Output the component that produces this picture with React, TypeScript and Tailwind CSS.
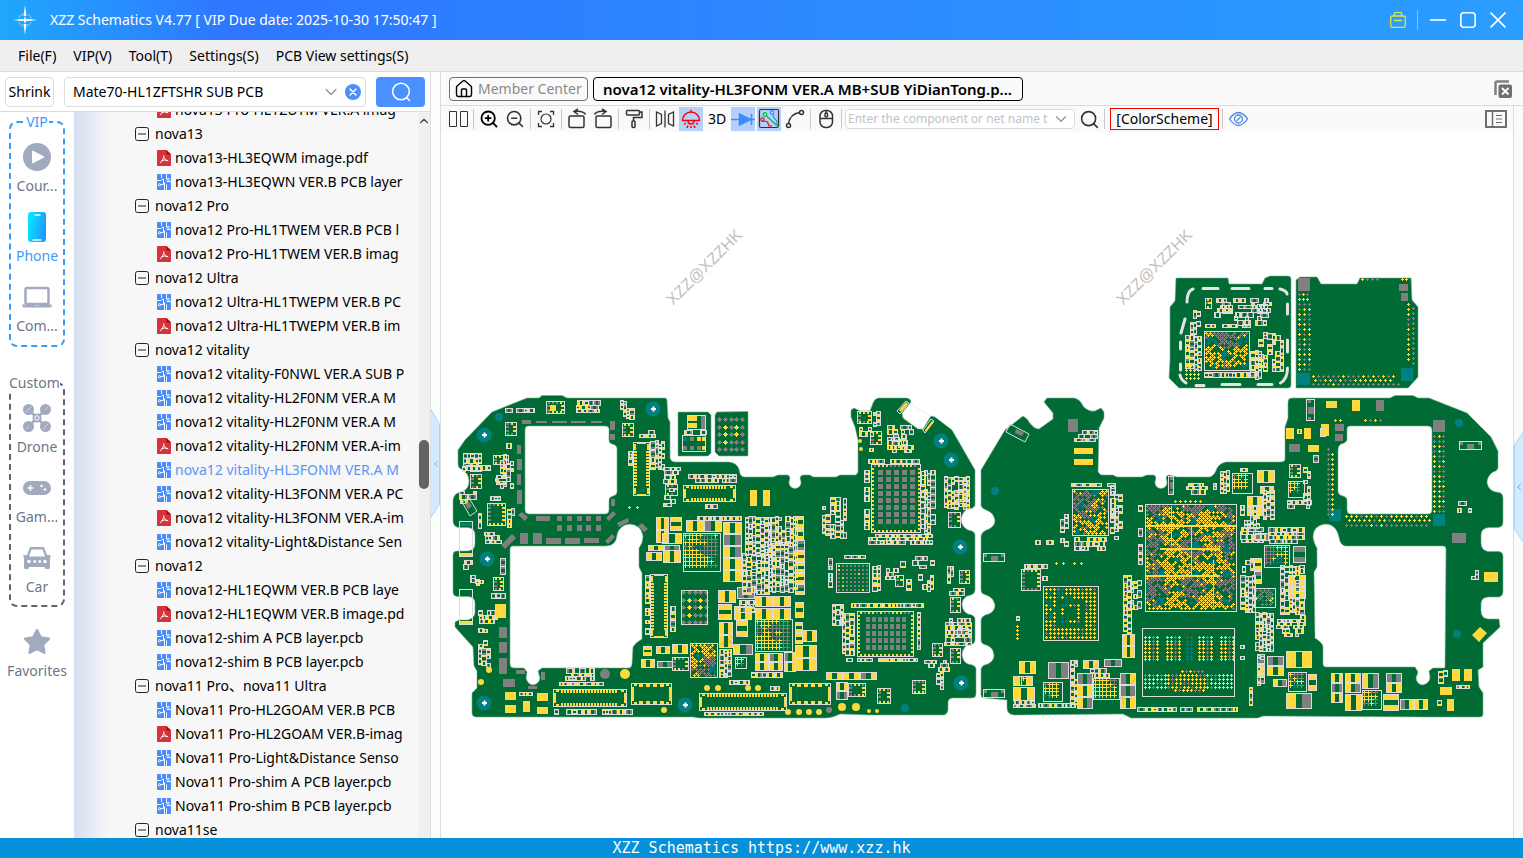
import React from "react";
import { ChevronDown, ChevronLeft, ChevronUp, House, Search, Star, ZoomIn, ZoomOut } from "lucide-react";

const MENU = ["File(F)", "VIP(V)", "Tool(T)", "Settings(S)", "PCB View settings(S)"];

type Row = { kind: "group" | "pcb" | "pdf"; label: string; active?: boolean };

const TREE: Row[] = [
  { kind: "pdf", label: "nova13 Pro-HL1ZUTM VER.A imag" },
  { kind: "group", label: "nova13" },
  { kind: "pdf", label: "nova13-HL3EQWM image.pdf" },
  { kind: "pcb", label: "nova13-HL3EQWN VER.B PCB layer" },
  { kind: "group", label: "nova12 Pro" },
  { kind: "pcb", label: "nova12 Pro-HL1TWEM VER.B PCB l" },
  { kind: "pdf", label: "nova12 Pro-HL1TWEM VER.B imag" },
  { kind: "group", label: "nova12 Ultra" },
  { kind: "pcb", label: "nova12 Ultra-HL1TWEPM VER.B PC" },
  { kind: "pdf", label: "nova12 Ultra-HL1TWEPM VER.B im" },
  { kind: "group", label: "nova12 vitality" },
  { kind: "pcb", label: "nova12 vitality-F0NWL VER.A SUB P" },
  { kind: "pcb", label: "nova12 vitality-HL2F0NM VER.A M" },
  { kind: "pcb", label: "nova12 vitality-HL2F0NM VER.A M" },
  { kind: "pdf", label: "nova12 vitality-HL2F0NM VER.A-im" },
  { kind: "pcb", label: "nova12 vitality-HL3FONM VER.A M", active: true },
  { kind: "pcb", label: "nova12 vitality-HL3FONM VER.A PC" },
  { kind: "pdf", label: "nova12 vitality-HL3FONM VER.A-im" },
  { kind: "pcb", label: "nova12 vitality-Light&Distance Sen" },
  { kind: "group", label: "nova12" },
  { kind: "pcb", label: "nova12-HL1EQWM VER.B PCB laye" },
  { kind: "pdf", label: "nova12-HL1EQWM VER.B image.pd" },
  { kind: "pcb", label: "nova12-shim A PCB layer.pcb" },
  { kind: "pcb", label: "nova12-shim B PCB layer.pcb" },
  { kind: "group", label: "nova11 Pro、nova11 Ultra" },
  { kind: "pcb", label: "Nova11 Pro-HL2GOAM VER.B PCB" },
  { kind: "pdf", label: "Nova11 Pro-HL2GOAM VER.B-imag" },
  { kind: "pcb", label: "Nova11 Pro-Light&Distance Senso" },
  { kind: "pcb", label: "Nova11 Pro-shim A PCB layer.pcb" },
  { kind: "pcb", label: "Nova11 Pro-shim B PCB layer.pcb" },
  { kind: "group", label: "nova11se" },
];

/* ---------- board drawing ---------- */

type Box = [number, number, number, number];
type Layer = "gold" | "gray" | "teal" | "line";

const OUTLINES = [
  // main board, front, with its two battery cut-outs
  "M458 450L465 440L492 412L527 398H539L542 395.500H562L567 398H665Q667 398 667 401L668 418L670 422V458Q671 462 675 462H729Q737 463 739 469Q740 477 744 477H773L778 475H788Q791 477 789.500 480A6 6 0 1 0 800.500 480Q799 476 803 475H810L813 477H836L840 475H856L858 472V440L855 427L851 417V410L854 408L860 411H870L873 403Q875 398 879 398H907Q911 399 911 402L902 413Q902 417 904 419L918 429H923L931 416L935 417L952 430L975 470V505Q974 509 967 509Q961 514 961 520Q962 527 968 530Q975 531 975 535V590Q975 595 967 596Q962 599 962 605Q963 612 968 614Q975 615 975 619V640Q975 645 967 645Q962 649 962 655Q963 662 968 664Q976 665 976 669V694Q976 698 972 698H952Q948 699 948 702V710Q947 715 943 715H870L840 714Q832 718 826 718H699L693 717H476Q472 717 472 713V693L477 688V671L474 666L473 647L455 627V622L459 620H468Q475 618 475 612V603Q475 597 468 596.500H457Q453 596 453 592V555Q453 551 457 551H468Q475 550 475 544V535Q475 528 468 527.500H458Q453 526 453 521V500Q454 493 461 492Q469 490 469 481Q469 473 461 469Q458 468 458 464ZM528 426Q525 426 525 430V510Q525 514 529 514H605Q609 514 609 510V500Q609 497 613 496Q617 495 617 492V449Q617 445 612 444Q609 443 609 440V429Q609 426 605 426ZM513 546Q510 546 510 549V664Q510 668 514 668H524L527 672L526 678Q528 685 533 685Q539 684 540 678L538 671L542 668H629Q632 667 632 664L633 647Q635 643 642 639V573L639 567V548Q643 543 643 536Q641 525 630 524Q619 525 617 535Q616 546 606 546Z",
  // main board, back
  "M981 470L1005 430L1023 416L1027 419Q1033 429 1039 429L1053 419V413L1044 402L1047 398H1074Q1080 399 1083 406Q1088 412 1095 411L1101 408L1104 412V418L1099 428L1098 472L1101 475H1113L1117 477H1142L1147 475H1154Q1157 477 1155.500 480A6 6 0 1 0 1166.500 480Q1165 476 1169 475L1177 477H1210Q1215 475 1217 468Q1220 463 1226 462H1281Q1285 462 1285 459V427L1288 418V402Q1288 398 1292 398H1390L1395 395.500H1413L1418 398H1429L1467 413L1491 437L1498 451V467Q1498 471 1493 472Q1487 476 1487 483Q1489 491 1496 492Q1503 492 1503 498V522Q1503 527 1498 527.500H1489Q1481 528 1481 535V543Q1481 550 1488 551.500H1499Q1503 552 1503 556V592Q1503 596 1499 597H1489Q1481 597 1481 604V611Q1481 618 1488 619H1499L1500 627L1483 643V667L1478 670L1479 687L1483 693V714Q1483 717 1480 717H1427L1263 716L1258 718H1131L1123 714L1014 715Q1007 714 1007 708V700L985 698Q981 698 981 695V669Q982 665 988 664Q994 661 994 655Q993 647 986 645Q981 644 981 640V620Q982 615 989 614Q995 611 995 605Q993 597 986 595Q981 594 981 590V536Q982 531 989 529Q995 526 995 520Q993 512 986 510Q981 508 981 505ZM1350 426Q1347 426 1347 429V440Q1346 443 1341 444Q1338 446 1338 450V491Q1338 495 1343 496Q1347 497 1347 500V510Q1347 514 1351 514H1428Q1432 514 1432 510V430Q1432 426 1428 426ZM1345 546Q1340 545 1339 537Q1336 524 1325 524Q1313 526 1313 537Q1314 544 1317 548V567L1314 572L1315 638Q1323 643 1323 647V664Q1323 667 1326 667H1415L1418 672L1416 678Q1417 685 1423 685Q1430 683 1430 677L1429 671L1433 668H1445L1446 549Q1446 546 1443 546Z",
  // shims
  "M1176 278H1228L1229 284H1262L1265 278L1270 276H1288Q1291 276 1291 279V385Q1291 388 1288 388H1179L1169 378L1170 360V307L1175 301Z",
  "M1296 280L1300 277H1317L1321 284H1357L1360 278H1411L1412 300L1418 307V377L1408 388H1296Z",
  "M678 412H708L711 415V453L708 456H678Z",
  "M717 412L748 411.500V456H719L715 452V415Z",
];

const GRAY_PADS: Box[] = [
  [522, 420, 9, 4], [536, 421, 11, 2], [552, 421, 15, 2], [571, 421, 15, 2], [591, 421, 11, 2],
  [610, 421, 5, 9], [610, 434, 5, 6], [517, 445, 4, 9], [517, 459, 5, 11], [517, 474, 4, 11],
  [517, 490, 5, 14], [611, 499, 4, 7], [536, 516, 14, 5], [557, 516, 5, 5], [567, 516, 5, 5],
  [577, 516, 5, 5], [586, 516, 5, 5], [596, 516, 5, 5], [557, 525, 5, 6], [567, 525, 5, 6],
  [577, 525, 5, 6], [586, 525, 5, 6], [596, 525, 5, 6], [520, 533, 8, 11], [533, 533, 9, 11],
  [546, 538, 15, 6], [565, 538, 15, 6], [584, 538, 15, 5], [499, 627, 8, 11], [499, 642, 8, 11],
  [499, 658, 8, 16], [503, 679, 12, 8], [516, 670, 9, 4], [528, 686, 9, 3], [541, 672, 4, 8],
  [1068, 419, 10, 13], [1376, 400, 8, 11], [1335, 424, 9, 7], [1335, 434, 8, 7], [1289, 444, 11, 8],
  [1433, 420, 12, 12], [1452, 533, 14, 10], [1298, 278, 12, 13], [1399, 284, 9, 7], [1401, 293, 7, 8],
  [701, 416, 4, 13], [690, 437, 4, 4], [683, 446, 4, 4], [690, 446, 4, 4], [697, 446, 4, 4],
];

const GOLD_PADS: Box[] = [
  [495, 604, 11, 14], [505, 692, 11, 8], [505, 705, 11, 8], [523, 701, 7, 11], [537, 693, 11, 8],
  [537, 707, 11, 7], [750, 490, 7, 16], [763, 490, 7, 16], [1074, 448, 19, 6], [1074, 459, 19, 6],
  [1326, 401, 11, 7], [1352, 400, 8, 11], [1286, 428, 8, 11], [1304, 428, 7, 11], [1321, 424, 8, 12],
  [1308, 445, 11, 7], [1484, 572, 14, 10], [1452, 669, 8, 12], [1464, 669, 8, 12], [1440, 687, 12, 8],
  [1447, 699, 7, 12], [688, 416, 9, 5], [688, 423, 9, 5], [697, 437, 4, 4], [702, 437, 4, 4],
  [702, 446, 4, 4], [550, 405, 6, 6],
];

const TEAL_PADS: Box[] = [
  [1329, 509, 12, 12], [1433, 514, 12, 12], [1297, 373, 13, 12], [1401, 368, 12, 13], [460, 523, 12, 3],
  [683, 437, 4, 4],
];

const FRAMES: Box[] = [[682, 435, 24, 17], [687, 415, 19, 15]];

// closely packed small parts
const DENSE: Box[] = [
  [576, 400, 25, 13], [650, 440, 16, 30], [663, 475, 16, 10], [663, 495, 14, 12], [745, 516, 28, 40],
  [770, 516, 28, 30], [742, 553, 30, 42], [768, 543, 30, 50],
  [504, 408, 33, 7], [462, 453, 20, 20], [466, 465, 26, 7], [484, 532, 18, 12], [478, 648, 15, 20],
  [565, 668, 30, 14], [558, 682, 50, 6], [553, 709, 80, 6], [687, 474, 50, 9], [704, 504, 14, 5],
  [696, 516, 48, 5], [719, 648, 14, 30], [867, 459, 55, 5],
  [868, 534, 65, 11], [850, 603, 78, 7], [842, 612, 13, 44], [845, 658, 75, 6], [832, 604, 12, 22],
  [828, 557, 6, 32], [843, 555, 25, 6], [872, 565, 9, 28], [944, 476, 26, 34], [944, 618, 28, 28],
  [1071, 483, 48, 6], [1073, 537, 34, 14], [1024, 564, 24, 5], [1137, 707, 102, 5], [1240, 527, 26, 18],
  [1268, 527, 38, 18], [1255, 612, 20, 40], [1286, 500, 26, 10], [1185, 335, 17, 36], [1203, 372, 55, 6],
  [1205, 324, 46, 6], [1070, 660, 8, 46], [1013, 700, 24, 9], [1038, 703, 40, 5], [1240, 575, 16, 38],
  [1280, 565, 26, 50], [1240, 468, 8, 6], [1220, 470, 12, 24], [704, 712, 60, 6],
  [893, 434, 14, 16], [920, 470, 6, 60], [645, 575, 5, 60], [670, 605, 6, 28], [628, 450, 5, 16],
  [864, 470, 6, 60], [917, 612, 5, 40], [1123, 574, 9, 60], [947, 565, 7, 20], [1110, 484, 8, 40],
  [1263, 490, 12, 30], [738, 600, 17, 14], [750, 672, 40, 7], [1250, 350, 12, 30],
];

// loosely placed small parts
const SPARSE: Box[] = [
  [620, 400, 15, 20], [638, 430, 18, 8], [506, 437, 8, 12], [500, 453, 14, 36], [495, 475, 12, 10],
  [459, 491, 18, 14], [489, 496, 20, 6], [507, 508, 8, 20], [478, 512, 6, 20], [463, 560, 12, 12],
  [470, 570, 10, 14], [500, 558, 6, 18], [476, 580, 10, 14], [490, 593, 18, 6], [478, 610, 20, 15],
  [478, 628, 10, 20], [519, 692, 14, 6], [625, 470, 6, 9], [663, 467, 20, 8], [668, 484, 10, 10],
  [822, 497, 30, 42], [858, 427, 16, 10], [873, 407, 8, 20], [868, 448, 14, 5], [720, 680, 30, 5],
  [886, 425, 28, 28], [924, 470, 12, 65], [885, 568, 14, 14], [900, 560, 8, 18], [911, 556, 24, 14],
  [906, 572, 8, 20], [918, 574, 16, 18], [948, 588, 18, 8], [924, 660, 26, 12], [936, 670, 8, 20],
  [1074, 430, 24, 12], [1037, 447, 7, 5], [1110, 490, 13, 50], [1060, 513, 10, 38], [1034, 540, 22, 5],
  [1042, 575, 6, 12], [1016, 607, 5, 14], [1016, 647, 6, 8], [1138, 505, 6, 60], [1130, 580, 12, 30],
  [1185, 483, 32, 14], [1297, 429, 5, 11], [1315, 427, 12, 14], [1313, 455, 8, 9], [1303, 466, 8, 40],
  [1458, 484, 6, 13], [1457, 501, 15, 14], [1471, 570, 8, 10], [1276, 615, 30, 22], [1257, 650, 8, 36],
  [1240, 630, 6, 30], [1249, 683, 6, 24], [1438, 670, 10, 16], [1455, 685, 18, 6], [1437, 699, 8, 14],
  [1190, 310, 15, 25], [1213, 298, 60, 22], [1234, 316, 34, 10], [1258, 332, 26, 40], [1240, 505, 20, 24],
  [1090, 668, 30, 10], [683, 430, 24, 5], [724, 685, 8, 6], [769, 686, 12, 6], [1242, 545, 14, 28],
];

// inductors and tank capacitors
const LARGE: Box[] = [
  [656, 517, 13, 26], [670, 517, 12, 14], [662, 533, 20, 11], [648, 545, 33, 6], [646, 552, 16, 9],
  [663, 550, 18, 13], [686, 520, 36, 12], [723, 522, 19, 62], [795, 516, 9, 24], [795, 540, 10, 56],
  [718, 590, 18, 13], [718, 604, 14, 16], [719, 622, 14, 26], [734, 606, 18, 14], [736, 620, 12, 17],
  [733, 644, 20, 11], [737, 587, 18, 12], [755, 596, 36, 11], [755, 608, 36, 12], [795, 602, 9, 16],
  [802, 630, 15, 12], [795, 645, 22, 26], [795, 622, 8, 22], [755, 653, 28, 18], [784, 652, 12, 20],
  [643, 646, 9, 10], [656, 646, 14, 8], [672, 644, 16, 10], [641, 659, 14, 9], [657, 661, 16, 7],
  [1019, 661, 17, 13], [1048, 662, 21, 17], [1083, 660, 16, 9], [1104, 659, 18, 8],
  [1077, 673, 16, 36], [1120, 673, 16, 36], [1122, 634, 13, 25], [1013, 676, 20, 10], [1013, 687, 22, 14],
  [1257, 470, 18, 13], [1260, 486, 14, 8], [1247, 496, 16, 21], [1293, 546, 13, 17], [1286, 651, 26, 17],
  [1286, 693, 26, 16], [1267, 656, 17, 21], [1257, 654, 8, 32], [1331, 673, 12, 30], [1345, 673, 16, 20],
  [1362, 673, 17, 16], [1386, 673, 16, 20], [1345, 694, 17, 17], [1383, 694, 16, 17],
  [1400, 699, 28, 11], [836, 682, 12, 18], [1308, 674, 9, 17], [1273, 679, 14, 8], [1255, 533, 14, 8],
  [1254, 558, 8, 26], [1288, 575, 18, 24], [826, 672, 52, 8],
];

const CHIPS: Box[] = [
  [546, 401, 19, 13], [505, 422, 12, 14], [622, 423, 12, 14], [493, 455, 16, 10], [470, 474, 12, 15],
  [487, 503, 19, 23], [493, 577, 11, 14], [665, 484, 13, 12], [857, 411, 15, 13],
  [870, 431, 12, 14], [948, 512, 13, 16], [959, 570, 11, 14], [950, 597, 11, 16], [932, 643, 11, 14],
  [950, 648, 11, 16], [895, 575, 9, 12], [822, 524, 12, 10], [848, 683, 18, 14], [877, 688, 14, 16],
  [912, 680, 14, 14], [1021, 569, 20, 22], [1289, 464, 12, 14], [954, 490, 14, 12], [957, 628, 12, 10],
  [1222, 305, 11, 9], [1257, 304, 11, 10], [1205, 298, 7, 11], [672, 657, 17, 14],
  [983, 553, 22, 9], [983, 689, 22, 9], [1306, 399, 9, 22], [1459, 441, 23, 9], [1168, 476, 6, 19],
  [459, 521, 14, 36], [459, 589, 14, 36],
];

const CONNECTORS: Box[] = [
  [633, 442, 17, 54], [683, 485, 53, 17], [650, 574, 18, 64], [553, 689, 74, 18], [699, 693, 88, 18],
  [631, 683, 41, 22], [789, 683, 42, 22],
];

const SCREWS = [[653, 409], [484, 435], [487, 559], [484, 703], [685, 705], [941, 441], [951, 460], [960, 547], [961, 683]];
const TEAL_DOTS = [[499, 417], [905, 708], [995, 491], [1459, 423], [1457, 634]];

const GOLD_DOTS = [
  [489, 670, 3], [481, 682, 3], [625, 674, 5], [664, 710, 3], [707, 688, 3], [718, 688, 3], [748, 688, 3],
  [758, 688, 3], [788, 712, 3], [799, 712, 3], [809, 712, 3], [819, 712, 3], [842, 707, 4], [856, 707, 4],
  [869, 711, 2], [877, 711, 2], [860, 441, 2], [861, 449, 2],
];

function seeded(seed: number) {
  let s = seed;
  return () => {
    s = (s * 16807) % 2147483647;
    return s / 2147483647;
  };
}

function drawParts() {
  const out: Record<Layer, string[]> = { gold: [], gray: [], teal: [], line: [] };
  const rnd = seeded(4177);

  const rect = (layer: Layer, x: number, y: number, w: number, h: number) =>
    out[layer].push(`M${x} ${y}h${w}v${h}h${-w}z`);

  const frame = (x: number, y: number, w: number, h: number) => {
    rect("line", x, y, w, 1);
    rect("line", x, y + h - 1, w, 1);
    rect("line", x, y, 1, h);
    rect("line", x + w - 1, y, 1, h);
  };

  const plus = (layer: Layer, x: number, y: number) => {
    rect(layer, x - 1, y, 3, 1);
    rect(layer, x, y - 1, 1, 3);
  };

  // plus with arms long enough to meet its neighbours
  const cross = (layer: Layer, x: number, y: number) => {
    rect(layer, x - 1, y, 4, 1);
    rect(layer, x, y - 1, 1, 4);
  };

  const padLayer = (gold = 0.6): Layer => (rnd() < gold ? "gold" : "gray");

  const part = (x: number, y: number, w: number, h: number, gold = 0.6) => {
    frame(x, y, w, h);
    const a = padLayer(gold);
    const b = rnd() < 0.6 ? a : padLayer(gold);
    if (w >= h) {
      const p = Math.max(1, Math.floor((w - 2) * 0.38));
      rect(a, x + 1, y + 1, p, h - 2);
      rect(b, x + w - 1 - p, y + 1, p, h - 2);
    } else {
      const p = Math.max(1, Math.floor((h - 2) * 0.38));
      rect(a, x + 1, y + 1, w - 2, p);
      rect(b, x + 1, y + h - 1 - p, w - 2, p);
    }
  };

  // fills a box column by column or row by row; `keep` is the share of slots that hold a part
  const cluster = ([x, y, w, h]: Box, min: number, max: number, keep: number) => {
    const size = () => min + Math.floor(rnd() * (max - min + 1));
    const upright = h > w;
    const along = upright ? w : h;
    const across = upright ? h : w;
    let a = 0;
    while (a + 3 < along) {
      const depth = Math.min(size(), along - a);
      let b = Math.floor(rnd() * 2);
      while (b + 3 < across) {
        const len = Math.min(size() + (rnd() < 0.45 ? 3 : 0), across - b);
        if (len > 3 && depth > 3 && rnd() < keep) {
          if (upright) part(x + a, y + b, depth, len);
          else part(x + b, y + a, len, depth);
        }
        b += len - 1 + (rnd() < 0.15 ? 1 : 0);
      }
      a += depth - 1;
    }
  };

  const large = ([x, y, w, h]: Box) => {
    const cols = Math.max(1, Math.round(w / 18));
    const rows = Math.max(1, Math.round(h / 12));
    const cw = Math.floor(w / cols);
    const rh = Math.floor(h / rows);
    for (let r = 0; r < rows; r++) for (let c = 0; c < cols; c++) part(x + c * cw, y + r * rh, cw, rh, 0.8);
  };

  // nets run in patches and bands over a ball field
  const netLayer = (x: number, y: number, teal: number): Layer => {
    const t = Math.sin(x * 0.19 + 1) * Math.cos(y * 0.23) + rnd() * 0.6;
    if (t > 1.4 - teal) return "teal";
    const v = Math.sin(x * 0.17) * 0.55 + Math.cos(y * 0.15) * 0.55 + (rnd() - 0.5) * 1.1;
    return v > 0.2 ? "gray" : "gold";
  };

  const bga = ([x, y, w, h]: Box, staggered: boolean, teal = 0) => {
    frame(x, y, w, h);
    if (staggered) {
      for (let r = 0, py = y + 2; py < y + h - 2; r++, py += 2)
        for (let px = x + 2 + (r % 2 ? 2 : 0); px < x + w - 2; px += 4)
          if (rnd() > 0.28) plus(netLayer(px, py, teal), px, py);
      return;
    }
    const cols = Math.floor((w - 3) / 3.7);
    const rows = Math.floor((h - 3) / 3.7);
    for (let r = 0; r < rows; r++)
      for (let c = 0; c < cols; c++) {
        const px = x + 2 + Math.round(c * 3.7);
        const py = y + 2 + Math.round(r * 3.7);
        cross(netLayer(px, py, teal), px, py);
      }
  };

  const chip = ([x, y, w, h]: Box) => {
    frame(x, y, w, h);
    if (w > h * 2) {
      rect("gray", x + 1, y + 1, 3, 3);
      rect("gray", x + Math.floor(w / 2) - 3, y + 3, 7, h - 4);
      rect("gray", x + w - 4, y + 1, 3, 3);
      return;
    }
    if (h > w * 2) {
      if (w < 12) {
        rect("gray", x + 2, y + 1, 3, 3);
        rect("gray", x + 2, y + Math.floor(h / 2) - 3, w - 3, 7);
        rect("gray", x + 2, y + h - 4, 3, 3);
      } else rect("gold", x + 1, y + h - 4, w - 2, 3);
      return;
    }
    for (let px = x + 2; px < x + w - 3; px += 4) {
      rect(padLayer(), px, y + 1, 2, 2);
      rect(padLayer(), px, y + h - 3, 2, 2);
    }
    for (let py = y + 4; py < y + h - 4; py += 4) {
      rect("gray", x + 1, py, 3, 2);
      rect("gold", x + w - 4, py, 3, 2);
    }
  };

  const connector = ([x, y, w, h]: Box) => {
    frame(x, y, w, h);
    const chunky = h === 22;
    if (w > h) {
      for (let px = x + 8; px < x + w - 9; px += chunky ? 7 : 3) {
        rect("gold", px, y + 1, chunky ? 4 : 2, 3);
        rect("gold", px, y + h - 4, chunky ? 4 : 2, 3);
      }
      [x + 1, x + w - 3].forEach((px) => rect("gold", px, y + 4, 2, h - 8));
      [x + 3, x + w - 6].forEach((px) => {
        rect("gold", px, y + 1, 3, 2);
        rect("gold", px, y + h - 3, 3, 2);
      });
    } else {
      for (let py = y + 9; py < y + h - 9; py += 3) {
        rect("gold", x + 1, py, 3, 2);
        rect("gold", x + w - 4, py, 3, 2);
      }
      rect("gold", x + 4, y + 1, w - 8, 1);
      rect("gold", x + 4, y + h - 2, w - 8, 1);
      [x + 1, x + w - 3].forEach((px) => {
        rect("gold", px, y + 2, 2, 6);
        rect("gold", px, y + h - 8, 2, 6);
      });
    }
  };

  // power package: pins on the rim, thermal pads inside
  const thermal = (x: number, y: number, w: number, h: number, cols: number, rows: number, sx: number, sw: number) => {
    frame(x, y, w, h);
    for (let px = x + 3; px < x + w - 3; px += 4) {
      rect(padLayer(), px, y + 1, 2, 2);
      rect("gold", px, y + h - 3, 2, 2);
    }
    for (let py = y + 4; py < y + h - 4; py += 4) {
      rect("gold", x + 1, py, 2, 2);
      rect("gold", x + w - 3, py, 2, 2);
    }
    const ox = x + Math.round((w - (cols - 1) * sx - sw) / 2);
    for (let r = 0; r < rows; r++)
      for (let c = 0; c < cols; c++) rect("gray", ox + c * sx, y + 6 + r * 7, sw, 5);
  };

  const diamonds = (x: number, y: number) => {
    for (let r = 0; r < 5; r++)
      for (let c = 0; c < 5; c++) {
        const gold = (r === 1 && (c === 1 || c === 3)) || (r === 2 && (c === 1 || c === 3)) || (r === 3 && c === 1);
        const layer = gold ? "gold" : "gray";
        const px = x + Math.round(c * 5.75);
        const py = y + Math.round(r * 7.5);
        rect(layer, px - 1, py - 1, 3, 3);
        rect(layer, px - 2, py, 5, 1);
        rect(layer, px, py - 2, 1, 5);
      }
  };

  const dots = (x: number, y: number, cols: number, rows: number, sx = 4, sy = 4, goldShare = 0.6) => {
    for (let r = 0; r < rows; r++)
      for (let c = 0; c < cols; c++) plus(padLayer(goldShare), x + c * sx, y + r * sy);
  };

  GRAY_PADS.forEach((b) => rect("gray", ...b));
  GOLD_PADS.forEach((b) => rect("gold", ...b));
  TEAL_PADS.forEach((b) => rect("teal", ...b));
  FRAMES.forEach((b) => frame(...b));
  LARGE.forEach(large);
  DENSE.forEach((b) => cluster(b, 4, 6, 0.92));
  SPARSE.forEach((b) => cluster(b, 4, 6, 0.55));
  CHIPS.forEach(chip);
  CONNECTORS.forEach(connector);

  bga([683, 533, 38, 39], false, 0.1);
  bga([755, 619, 38, 33], false);
  bga([690, 643, 28, 35], true, 0.4);
  bga([735, 657, 12, 12], false);
  bga([1072, 489, 37, 47], true, 0.4);
  bga([1145, 504, 92, 108], true, 0.4);
  bga([1204, 331, 46, 40], true, 0.6);
  bga([1232, 473, 21, 21], false);
  bga([1264, 545, 26, 23], false, 0.5);
  bga([1254, 588, 22, 20], true, 0.5);
  bga([1288, 481, 17, 17], false, 0.4);
  bga([1288, 672, 19, 20], false);
  bga([1362, 690, 20, 20], false);
  bga([1043, 682, 20, 20], false);
  bga([1093, 678, 27, 22], false);
  bga([1021, 676, 12, 10], false);

  // supply rails that cross the processor
  [[1146, 575, 74], [1146, 525, 90], [1160, 548, 60]].forEach(([x, y, w]) => rect("gold", x, y, w, 2));
  [[1191, 526, 50], [1171, 506, 40], [1213, 560, 46]].forEach(([x, y, h]) => rect("gold", x, y, 1, h));

  thermal(871, 464, 50, 69, 5, 8, 8, 5);
  thermal(857, 611, 57, 46, 7, 5, 6, 4);

  // gray pads array
  frame(836, 563, 34, 30);
  for (let r = 0; r < 7; r++)
    for (let c = 0; c < 8; c++) rect(rnd() < 0.12 ? "gold" : "gray", 838 + c * 4, 565 + r * 4, 2, 2);

  frame(681, 590, 27, 35);
  diamonds(683, 592);
  diamonds(719, 419);

  // CPU socket ring
  frame(1043, 586, 56, 55);
  for (let r = 0; r < 13; r++)
    for (let c = 0; c < 13; c++) {
      const ring = Math.min(r, c, 12 - r, 12 - c);
      if (ring === 3 || ring > 4) continue;
      plus(c < 7 && r < 9 && rnd() < 0.45 ? "teal" : padLayer(0.85), 1046 + c * 4, 589 + r * 4);
    }

  // memory package
  frame(1142, 628, 93, 69);
  [[1145, 4], [1167, 4], [1187, 2], [1199, 4], [1221, 4]].forEach(([x, cols]) => {
    for (let r = 0; r < 7; r++)
      for (let c = 0; c < cols; c++)
        plus(x === 1187 ? "teal" : c === 2 ? "gray" : "gold", x + c * 4, 637 + Math.round(r * 3.7));
  });
  for (let r = 0; r < 4; r++) for (let c = 0; c < 23; c++) plus(padLayer(0.75), 1145 + Math.round(c * 3.9), 675 + r * 4);
  dots(1182, 671, 6, 1);
  dots(1175, 690, 8, 1);

  // contact rows round the frame board
  dots(1328, 449, 1, 14, 4, 5, 0);
  dots(1332, 454, 1, 13, 4, 5, 1);
  dots(1434, 436, 1, 16, 4, 5, 0.7);
  dots(1439, 436, 1, 16, 4, 5, 0.5);
  dots(1443, 436, 1, 16, 4, 5, 0.2);
  dots(1346, 516, 17, 1, 5, 4, 0.7);
  dots(1349, 520, 17, 1, 5, 4, 0.7);
  dots(1346, 525, 17, 1, 5, 4, 0.1);
  dots(1299, 294, 3, 2, 4, 5, 0.5);
  dots(1299, 304, 3, 14, 5, 5, 0.5);
  dots(1408, 304, 1, 12, 4, 5, 0.8);
  dots(1413, 308, 1, 12, 4, 5, 0);
  dots(1313, 376, 17, 1, 5, 4, 0.6);
  dots(1315, 380, 16, 1, 5, 4, 0.8);
  dots(1313, 384, 18, 1, 5, 4, 0.1);
  dots(1186, 366, 4, 4, 4, 4, 1);
  dots(1335, 420, 2, 1, 5);
  dots(1365, 420, 4, 1, 5);
  dots(1362, 279, 4, 1, 5, 4, 0.5);
  dots(1402, 279, 2, 1, 4, 4, 1);
  dots(1056, 563, 2, 1, 7, 4, 1);
  dots(1074, 563, 2, 1, 7, 4, 1);
  dots(1017, 626, 1, 4, 4, 4, 1);
  dots(1175, 501, 6, 1, 5, 4, 1);
  dots(629, 507, 2, 1, 8, 4, 1);

  return {
    gold: out.gold.join(""),
    gray: out.gray.join(""),
    teal: out.teal.join(""),
    line: out.line.join(""),
  };
}

const PARTS = drawParts();

const Watermark = ({ x, y, fill }: { x: number; y: number; fill: string }) => (
  <text
    transform={`translate(${x} ${y}) rotate(-45)`}
    fill={fill}
    fontSize="16"
    fontFamily="'Liberation Sans', Arial, sans-serif"
  >
    XZZ@XZZHK
  </text>
);

const BoardView = () => (
  <svg viewBox="441 132 1072 706" className="block h-full w-full" role="img" aria-label="PCB layout">
    <g fill="#006b35" stroke="#6fae8c" strokeWidth="0.600" fillRule="evenodd">
      {OUTLINES.map((d) => (
        <path key={d} d={d} />
      ))}
    </g>

    <g shapeRendering="crispEdges">
      <path d={PARTS.gray} fill="#808080" />
      <path d={PARTS.teal} fill="#008080" />
      <path d={PARTS.gold} fill="#ffd83d" />
      <path d={PARTS.line} fill="#dcdcdc" />
    </g>

    {/* parts that sit at an angle */}
    <path
      d="M518 515l4-3 6 5-3 4zM501 545l11-11 4 4-11 11zM606 518l7-7 3 3-7 7zM617 523l11-5 1 4-10 5zM638 526l4-3 6 6-4 3zM605 541l7-7 3 3-7 7z"
      fill="#808080"
    />
    <g fill="none" stroke="#dcdcdc">
      <path d="M1010 424l19 10-4 8-19-10zM462 502l7-4 8 13-7 5zM897 411l9-10 3 2-9 11zM923 430l8-11 3 2-9 12z" />
      <path d="M911 404l19 12M903 417l20 13" strokeWidth="0.500" />
    </g>
    <path d="M899 410l7-8 2 2-7 8zM925 430l7-9 2 1-8 10zM1472 635l8-8 7 6-8 9z" fill="#ffd83d" />
    <path d="M1016 429l8 3-2 4-7-3zM465 504l4-2 3 4-4 3z" fill="#808080" />

    {/* shield can outline */}
    <path
      d="M1187 302q0-11 6-13M1203 288.500h15M1232 288.500h17M1265 288.500h7M1280 289q7 2 7 5M1287.500 304v10M1287.500 340v12M1287.500 368q0 11-7 15M1272 384.500h-14M1240 384.500h-18M1204 385.500h-8M1186 383q-5-3-6-8M1180.500 370v-6M1180.500 349v-7M1181 333l4-14"
      fill="none"
      stroke="#e4e4e4"
      strokeWidth="3"
      strokeLinecap="round"
    />

    {SCREWS.map(([cx, cy]) => (
      <g key={`${cx}-${cy}`}>
        <circle cx={cx} cy={cy} r="7.500" fill="#008080" />
        <path d={`M${cx - 2} ${cy}h5M${cx + 0.5} ${cy - 2.5}v5`} stroke="#fff" strokeWidth="2" />
      </g>
    ))}
    {TEAL_DOTS.map(([cx, cy]) => (
      <circle key={`${cx}-${cy}`} cx={cx} cy={cy} r="4" fill="#008080" />
    ))}
    {GOLD_DOTS.map(([cx, cy, r]) => (
      <circle key={`${cx}-${cy}`} cx={cx} cy={cy} r={r} fill="#ffd83d" />
    ))}
    <circle cx="605" cy="674" r="5" fill="#808080" />
    <circle cx="829" cy="710" r="3" fill="#808080" />
    <path d="M459.500 527v26M472.500 527v26M459.500 596v24" stroke="#dcdcdc" strokeWidth="1" />

    <Watermark x={673} y={306} fill="#c4c0bb" />
    <Watermark x={1123} y={306} fill="#c4c0bb" />
    <Watermark x={673} y={706} fill="#7a5a2030" />
    <Watermark x={1123} y={706} fill="#7a5a2030" />
  </svg>
);

/* ---------- icons ---------- */

const Logo = () => (
  <svg viewBox="0 0 24 30" className="h-[30px] w-6" fill="#fff">
    <path d="M12 0l1.500 11h-3zM12 30l1.500-11h-3zM0 15l10-1.200v2.400zM24 15l-10-1.200v2.400z" />
    <circle cx="12" cy="15" r="6.500" fill="none" stroke="#9cc8ff" strokeWidth="1" strokeDasharray="6 4.200" strokeDashoffset="-2" />
    <path d="M12 11l1 3 3 1-3 1-1 3-1-3-3-1 3-1z" />
  </svg>
);

const PcbIcon = () => (
  <svg viewBox="0 0 14 16" className="h-4 w-3.5 shrink-0" fill="none" stroke="#fff" strokeWidth="0.900">
    <rect width="14" height="16" rx="1" fill="#4a8df8" stroke="none" />
    <path d="M4.500 0v4M0 6.500h3.500l3-1.500M6.500 5v5.500h-3M7.500 16V8.500M9.500 0v5.500M9.500 7.500h4.500M9.500 16v-5.500" />
    <circle cx="2.500" cy="10.800" r="1.100" />
    <circle cx="11.300" cy="5.300" r="1.100" />
  </svg>
);

const PdfIcon = () => (
  <svg viewBox="0 0 14 16" className="h-4 w-3.5 shrink-0">
    <path d="M1 0h8.500L14 4.500V15a1 1 0 0 1-1 1H1a1 1 0 0 1-1-1V1a1 1 0 0 1 1-1z" fill="#d5333b" />
    <path d="M9.500 0L14 4.500H10.500a1 1 0 0 1-1-1z" fill="#8b1116" />
    <path d="M6.500 5.500c1.200 0 .4 3-3 7.200M6.800 7.500c.6 2 2 3.200 4 3.300M4.500 11c1.600-1 4-1.200 6-.6" fill="none" stroke="#fff" strokeWidth="1" strokeLinecap="round" />
  </svg>
);

const GroupIcon = () => (
  <svg viewBox="0 0 14 14" className="size-3.5 shrink-0" fill="none" stroke="#222">
    <rect x="0.500" y="0.500" width="13" height="13" rx="2" />
    <path d="M3 7h8" />
  </svg>
);

const PlayIcon = () => (
  <svg viewBox="0 0 28 28" className="size-7">
    <circle cx="14" cy="14" r="14" fill="#a1aabf" />
    <path d="M9.500 8v12L21 14z" fill="#fff" stroke="#fff" strokeLinejoin="round" />
  </svg>
);

const PhoneIcon = () => (
  <svg viewBox="0 0 28 30" className="h-[30px] w-7">
    <defs>
      <linearGradient id="phone" x1="0" y1="0" x2="1" y2="0.300">
        <stop offset="0" stopColor="#04effd" />
        <stop offset="1" stopColor="#1e9cff" />
      </linearGradient>
    </defs>
    <rect x="5" width="18" height="30" rx="3" fill="url(#phone)" />
    <path d="M12 3h5M10 28h8" stroke="#e8fbff" strokeWidth="1.500" strokeLinecap="round" />
  </svg>
);

const LaptopIcon = () => (
  <svg viewBox="0 0 30 22" className="h-[22px] w-[30px]">
    <rect x="3.500" y="2" width="23" height="16" rx="1.500" fill="none" stroke="#a1aabf" strokeWidth="2.500" />
    <path d="M0 18.500h12l1 1h4l1-1h12l-1 3H1z" fill="#a1aabf" />
  </svg>
);

const DroneIcon = () => (
  <svg viewBox="0 0 28 30" className="h-[30px] w-7" fill="#a1aabf">
    {[[5.5, 6.5], [22.5, 6.5], [5.5, 23.5], [22.5, 23.5]].map(([x, y]) => (
      <g key={`${x}-${y}`}>
        <circle cx={x} cy={y} r="5.500" />
        <path d={`M${x - 3} ${y + 3}L${x + 3} ${y - 3}`} stroke="#d9deea" strokeWidth="0.800" />
      </g>
    ))}
    <path d="M6 7l16 16M22 7L6 23" stroke="#a1aabf" strokeWidth="2.500" />
    <circle cx="14" cy="15" r="4.500" />
    <circle cx="14" cy="15" r="2.200" fill="none" stroke="#fff" />
  </svg>
);

const GamepadIcon = () => (
  <svg viewBox="0 0 28 14" className="h-3.5 w-7">
    <rect width="28" height="14" rx="7" fill="#a1aabf" />
    <path d="M4.500 7h6M7.500 4v6" stroke="#fff" strokeWidth="1.500" />
    <circle cx="18.500" cy="5" r="1.200" fill="#fff" />
    <circle cx="22" cy="8.500" r="1.200" fill="#fff" />
  </svg>
);

const CarIcon = () => (
  <svg viewBox="0 0 28 24" className="h-6 w-7">
    <path d="M7 1h14l3 8h3.500v2L27 12v9.500a1.500 1.500 0 0 1-1.500 1.500h-2a1.500 1.500 0 0 1-1.500-2H6a1.500 1.500 0 0 1-1.500 2h-2A1.500 1.500 0 0 1 1 21.500V12L.5 11V9H4z" fill="#a1aabf" />
    <path d="M8.500 3.500h11l2.500 7H6z" fill="#fff" />
    <path d="M10.500 15.500h2.500M15.500 15.500H18" stroke="#fff" strokeWidth="2.500" />
    <circle cx="6" cy="15.500" r="1.800" fill="#fff" />
    <circle cx="22" cy="15.500" r="1.800" fill="#fff" />
  </svg>
);

type ToolSvgProps = { children: React.ReactNode; color?: string; width?: number };

const ToolSvg = ({ children, color = "#333", width = 1.5 }: ToolSvgProps) => (
  <svg viewBox="0 0 24 24" className="size-6" fill="none" stroke={color} strokeWidth={width}>
    {children}
  </svg>
);

const SplitIcon = () => (
  <ToolSvg width={1}>
    <path d="M3.500 4.500h7v15h-7zM14.500 4.500h7v15h-7z" />
  </ToolSvg>
);

const FitIcon = () => (
  <ToolSvg width={1.3}>
    <path d="M4.500 8V4.500H8M16 4.500h3.500V8M19.500 16v3.500H16M8 19.500H4.500V16" />
    <circle cx="12" cy="12" r="5" strokeWidth="1.200" />
  </ToolSvg>
);

const RotateLeftIcon = () => (
  <ToolSvg>
    <rect x="4" y="9" width="15" height="11.500" rx="1.500" />
    <path d="M20.500 7.500Q18 3.500 10 4.500M13 2l-4 2.500 4 3" />
  </ToolSvg>
);

const RotateRightIcon = () => (
  <ToolSvg>
    <rect x="5" y="9" width="15" height="11.500" rx="1.500" />
    <path d="M3.500 7.500Q6 3.500 14 4.500M11 2l4 2.500-4 3" />
  </ToolSvg>
);

const RollerIcon = () => (
  <ToolSvg>
    <rect x="4.500" y="3.500" width="13" height="4.500" rx="1" />
    <path d="M17.500 5H20v5.500h-8.500V14" />
    <rect x="10" y="14" width="3" height="6.500" rx="1" />
  </ToolSvg>
);

const MirrorIcon = () => (
  <ToolSvg width={1.3}>
    <path d="M12 3.500v17M3.500 5v14l5-2.500v-9zM20.500 5v14l-5-2.500v-9z" />
  </ToolSvg>
);

const DomeIcon = () => (
  <ToolSvg color="#f00">
    <path d="M3.500 13.500a8.500 8.500 0 0 1 17 0zM12 5V3M9 13.500a3 3.500 0 0 0 6 0M7 16l-2 1.500M17 16l2 1.500M9 18.500l-1 2.500M15 18.500l1 2.500M12 19v2" />
  </ToolSvg>
);

const DiodeIcon = () => (
  <ToolSvg color="#3e8bff">
    <path d="M0 12.500h24M20.500 7v11" />
    <path d="M8.500 7v11l11-5.500z" fill="#3e8bff" />
  </ToolSvg>
);

const NetIcon = () => (
  <ToolSvg width={1.2}>
    <rect x="2.500" y="2.500" width="19" height="18" rx="1.500" />
    <g stroke="#00c235">
      <circle cx="8" cy="7.500" r="1.800" />
      <path d="M9.500 9l12 11" />
    </g>
    <g stroke="#3e8bff">
      <circle cx="15" cy="5.500" r="1.800" />
      <path d="M16 7l1 4 3 3v4" />
    </g>
    <g stroke="#f00">
      <circle cx="5.500" cy="12.500" r="1.600" />
      <path d="M6.500 14l4 1 1.500 4h3" />
    </g>
  </ToolSvg>
);

const CurveIcon = () => (
  <ToolSvg>
    <circle cx="18.500" cy="5.500" r="2" />
    <circle cx="5.500" cy="18.500" r="2" />
    <path d="M16.500 5.500Q7 7 5.500 16.500" />
  </ToolSvg>
);

const MouseIcon = () => (
  <ToolSvg>
    <rect x="6" y="3.500" width="12.500" height="17" rx="5.500" />
    <path d="M6 11.500h12.500M12.200 3.500v3" />
    <rect x="11" y="6" width="2.500" height="4" rx="1" />
  </ToolSvg>
);

const EyeIcon = () => (
  <ToolSvg color="#4b86e0" width={1.3}>
    <path d="M3.500 12Q8 5.500 12.500 5.500T21.500 12Q17 18.500 12.500 18.500T3.500 12z" />
    <circle cx="12.500" cy="12" r="4" />
    <path d="M10.500 14l4-4" />
  </ToolSvg>
);

const LicenceIcon = () => (
  <svg viewBox="0 0 16 16" className="size-4" fill="none" stroke="#e3e63c" strokeWidth="1.300">
    <rect x="0.700" y="4" width="14.600" height="11.300" rx="1.500" />
    <path d="M4.500 4V1.500A.8.8 0 0 1 5.300.7h5.400a.8.8 0 0 1 .8.800V4M4 8.500h8" />
  </svg>
);

const WindowIcon = ({ children }: { children: React.ReactNode }) => (
  <svg viewBox="0 0 16 16" className="size-4" fill="none" stroke="#fff" strokeWidth="1.600">
    {children}
  </svg>
);

const ClearIcon = () => (
  <svg viewBox="0 0 16 16" className="size-4">
    <circle cx="8" cy="8" r="8" fill="#4a90f7" />
    <path d="M5 5l6 6M11 5l-6 6" stroke="#fff" strokeWidth="1.500" strokeLinecap="round" />
  </svg>
);

const SearchIcon = () => (
  <svg viewBox="0 0 20 20" className="size-5" fill="none" stroke="currentColor" strokeWidth="1.600" strokeLinecap="round">
    <circle cx="10" cy="9.500" r="8.300" />
    <path d="M15.500 15.500l3 3" />
  </svg>
);

const CloseAllIcon = () => (
  <svg viewBox="0 0 18 18" className="size-[18px]">
    <path d="M1.500 15V3a1.500 1.500 0 0 1 1.500-1.500h12" fill="none" stroke="#808080" strokeWidth="2.500" />
    <rect x="4.500" y="4.500" width="13.500" height="13.500" rx="2" fill="#707070" />
    <path d="M8 8l6.500 6.500M14.500 8L8 14.500" stroke="#fff" strokeWidth="1.800" />
  </svg>
);

const PanelIcon = () => (
  <svg viewBox="0 0 22 18" className="h-[18px] w-[22px]" fill="none" stroke="#707070">
    <rect x="1" y="1" width="20" height="16" strokeWidth="2" />
    <path d="M7.500 1v16" strokeWidth="1.500" />
    <path d="M11 5.500h6M11 9h6M11 12.500h6" strokeWidth="1.200" />
  </svg>
);

/* ---------- panels ---------- */

const TitleBar = () => (
  <header className="flex h-10 shrink-0 items-center bg-linear-to-r from-[#1fa7fb] via-[#2f76ff] via-15% to-[#2a9eff] pr-[17px] pl-[13px] text-white">
    <Logo />
    <h1 className="ml-[13px] flex-1">XZZ Schematics V4.77 [ VIP Due date: 2025-10-30 17:50:47 ]</h1>
    <button aria-label="Licence"><LicenceIcon /></button>
    <span className="mr-3 ml-[11px] h-5 w-px bg-white/40" />
    <div className="flex gap-3.5">
      <button aria-label="Minimize"><WindowIcon><path d="M0 8h16" /></WindowIcon></button>
      <button aria-label="Maximize"><WindowIcon><rect x="0.800" y="0.800" width="14.400" height="14.400" rx="3" /></WindowIcon></button>
      <button aria-label="Close"><WindowIcon><path d="M0.500 0.500l15 15M15.500 0.500l-15 15" /></WindowIcon></button>
    </div>
  </header>
);

const MenuBar = () => (
  <nav className="flex h-8 shrink-0 items-center gap-[17px] border-b border-[#dcdcdc] bg-[#efefef] px-[18px] pt-px">
    {MENU.map((item) => (
      <button key={item}>{item}</button>
    ))}
  </nav>
);

type CategoryProps = { label: string; icon: React.ReactNode; active?: boolean };

const Category = ({ label, icon, active }: CategoryProps) => (
  <button className={`flex h-[70px] w-full flex-col items-center ${active ? "text-[#3b9bf5]" : "text-[#6c7689]"}`}>
    <span className="mt-2.5 flex h-[30px] items-center">{icon}</span>
    <span className="mt-1 leading-5">{label}</span>
  </button>
);

const Categories = () => (
  <div className="flex w-[74px] shrink-0 flex-col items-center bg-white">
    <fieldset className="h-[235px] w-14 min-w-0 rounded-lg border-2 border-dashed border-[#3b9bf5]">
      <legend className="mx-auto px-px leading-5 text-[#3b9bf5]">VIP</legend>
      <div className="flex flex-col">
        <Category label="Cour..." icon={<PlayIcon />} />
        <Category label="Phone" icon={<PhoneIcon />} active />
        <Category label="Com..." icon={<LaptopIcon />} />
      </div>
    </fieldset>
    <fieldset className="mt-[26px] h-[234px] w-14 min-w-0 rounded-lg border-2 border-dashed border-[#5d6575]">
      <legend className="-mx-0.5 leading-5 text-[#6c7689]">Custom</legend>
      <div className="flex flex-col">
        <Category label="Drone" icon={<DroneIcon />} />
        <Category label="Gam..." icon={<GamepadIcon />} />
        <Category label="Car" icon={<CarIcon />} />
      </div>
    </fieldset>
    <div className="mt-2.5 w-full">
      <Category label="Favorites" icon={<Star size={30} fill="#a1aabf" stroke="#a1aabf" strokeWidth={1} />} />
    </div>
  </div>
);

const Tree = () => (
  <div className="flex min-w-0 flex-1 overflow-hidden bg-linear-to-r from-[#d5dff0] via-[#f7f7f7] via-10% to-[#f7f7f7]">
    <ul className="-mt-3.5 mr-3 min-w-0 flex-1 overflow-hidden whitespace-nowrap">
      {TREE.map(({ kind, label, active }, i) => (
        <li key={i} className={kind === "group" ? "pl-[61px]" : "pl-[83px]"}>
          <button className={`flex h-6 items-center ${kind === "group" ? "gap-1.5" : "gap-1"} ${active ? "text-[#5b95f7]" : "text-black"}`}>
            {kind === "group" && <GroupIcon />}
            {kind === "pcb" && <PcbIcon />}
            {kind === "pdf" && <PdfIcon />}
            <span>{label}</span>
          </button>
        </li>
      ))}
    </ul>
    <div className="flex w-3 shrink-0 flex-col items-center bg-[#f0f0f0]">
      <ChevronUp size={14} strokeWidth={2} className="mt-0.5 shrink-0 text-[#444]" />
      <span className="mt-[312px] h-[49px] w-2.5 shrink-0 rounded-full bg-[#636363]" />
    </div>
  </div>
);

const LeftPanel = () => (
  <aside className="flex w-[431px] shrink-0 flex-col border-r border-[#dcdcdc]">
    <div className="flex h-10 shrink-0 items-center border-b border-[#dcdcdc] px-[5px]">
      <button className="h-[30px] w-[49px] rounded border border-[#dcdcdc]">Shrink</button>
      <div className="ml-2.5 flex h-[30px] min-w-0 flex-1 items-center rounded border border-[#dcdcdc] px-1">
        <input
          aria-label="Search files"
          defaultValue="Mate70-HL1ZFTSHR SUB PCB"
          className="min-w-0 flex-1 bg-transparent pl-1 outline-none"
        />
        <button aria-label="History" className="text-[#8a93a5]"><ChevronDown size={20} strokeWidth={1.5} /></button>
        <button aria-label="Clear" className="ml-1"><ClearIcon /></button>
      </div>
      <button aria-label="Search" className="ml-2.5 flex h-[30px] w-[49px] items-center justify-center rounded-sm bg-[#4a90ff] text-white">
        <SearchIcon />
      </button>
    </div>
    <div className="flex min-h-0 flex-1">
      <Categories />
      <Tree />
    </div>
  </aside>
);

const CollapseHandle = () => (
  <button aria-label="Collapse panel" className="relative block h-28 w-[9px] text-[#5aa9f0]">
    <svg viewBox="0 0 9 112" className="h-28 w-[9px]" fill="#d4eaff" stroke="#a9d2f8">
      <path d="M-1 0L8.500 16v80L-1 111z" />
    </svg>
    <ChevronLeft size={10} className="absolute top-[51px] left-0" />
  </button>
);

const ExpandHandle = () => (
  <button aria-label="Expand panel" className="relative block h-28 w-[9px] text-[#3f8ff0]">
    <svg viewBox="0 0 9 112" className="h-28 w-[9px]" fill="#d4eaff" stroke="#a9d2f8">
      <path d="M10 0L0.500 14v84L10 112z" />
    </svg>
    <ChevronLeft size={10} className="absolute top-[51px] left-0" />
  </button>
);

const Tabs = () => (
  <div className="flex h-[34px] shrink-0 items-center gap-[5px] border-b border-[#dcdcdc] bg-[#fafafa] pr-[11px] pl-2">
    <button className="flex h-6 w-[139px] items-center gap-1 rounded border border-[#707070] pl-1 whitespace-nowrap text-[#8a8a8a]">
      <House size={20} strokeWidth={1.7} className="shrink-0 text-black" />
      Member Center
    </button>
    <button className="h-6 w-[430px] overflow-hidden rounded border border-black pl-[9px] text-left text-[15px] leading-5 font-semibold whitespace-nowrap">
      nova12 vitality-HL3FONM VER.A MB+SUB YiDianTong.p...
    </button>
    <button aria-label="Close all tabs" className="ml-auto"><CloseAllIcon /></button>
  </div>
);

const Sep = () => <span className="mx-px h-5 w-px bg-[#c8c8c8]" />;

type ToolProps = { label: string; on?: boolean; children: React.ReactNode };

const Tool = ({ label, on, children }: ToolProps) => (
  <button aria-label={label} className={`flex size-6 shrink-0 items-center justify-center ${on ? "bg-[#b5d0fb]" : ""}`}>
    {children}
  </button>
);

const Toolbar = () => (
  <div className="flex h-[26px] shrink-0 items-center gap-0.5 bg-[#fafafa] pr-1.5 pl-[5px]">
    <Tool label="Split view"><SplitIcon /></Tool>
    <Sep />
    <Tool label="Zoom in"><ZoomIn size={20} strokeWidth={2.2} /></Tool>
    <Tool label="Zoom out"><ZoomOut size={20} strokeWidth={1.9} className="text-[#333]" /></Tool>
    <Sep />
    <Tool label="Fit"><FitIcon /></Tool>
    <Sep />
    <Tool label="Rotate left"><RotateLeftIcon /></Tool>
    <Tool label="Rotate right"><RotateRightIcon /></Tool>
    <Sep />
    <Tool label="Color"><RollerIcon /></Tool>
    <Sep />
    <Tool label="Mirror"><MirrorIcon /></Tool>
    <Tool label="Light" on><DomeIcon /></Tool>
    <Tool label="3D">3D</Tool>
    <Tool label="Diode" on><DiodeIcon /></Tool>
    <Tool label="Net" on><NetIcon /></Tool>
    <Tool label="Curve"><CurveIcon /></Tool>
    <Sep />
    <Tool label="Mouse"><MouseIcon /></Tool>
    <Sep />
    <div className="flex h-5 w-[230px] items-center rounded-sm border border-[#dcdcdc] bg-white pr-1">
      <input
        aria-label="Component or net name"
        placeholder="Enter the component or net name t"
        className="min-w-0 flex-1 bg-transparent pl-0.5 text-xs outline-none placeholder:text-[#bfc3ca]"
      />
      <ChevronDown size={18} strokeWidth={1.7} className="text-[#8f959e]" />
    </div>
    <Tool label="Find"><Search size={21} strokeWidth={1.8} className="text-[#333]" /></Tool>
    <Sep />
    <button className="ml-0.5 h-[22px] w-[109px] border border-[#f00] leading-5">[ColorScheme]</button>
    <Sep />
    <Tool label="Show"><EyeIcon /></Tool>
    <button aria-label="Layers panel" className="ml-auto"><PanelIcon /></button>
  </div>
);

const App = () => {
  return (
    <div className="flex h-screen flex-col overflow-hidden bg-white font-['Noto_Sans','Noto_Sans_CJK_SC',sans-serif] text-sm text-black">
      <TitleBar />
      <MenuBar />
      <div className="flex min-h-0 flex-1">
        <LeftPanel />
        <div className="flex w-[9px] shrink-0 flex-col justify-center bg-[#fafffa] pt-[18px]">
          <CollapseHandle />
        </div>
        <main className="flex min-w-0 flex-1 flex-col border-l border-[#dcdcdc]">
          <Tabs />
          <div className="flex min-h-0 flex-1">
            <div className="flex min-w-0 flex-1 flex-col">
              <Toolbar />
              <div className="min-h-0 flex-1">
                <BoardView />
              </div>
            </div>
            <div className="flex w-2.5 shrink-0 flex-col justify-center border-l border-[#dcdcdc] bg-[#fafafa] pt-[30px]">
              <ExpandHandle />
            </div>
          </div>
        </main>
      </div>
      <footer className="h-5 shrink-0 bg-[#0590d9] text-center font-['DejaVu_Sans_Mono',monospace] text-[15px] leading-5 text-white">
        XZZ Schematics https://www.xzz.hk
      </footer>
    </div>
  );
};

export default App;
